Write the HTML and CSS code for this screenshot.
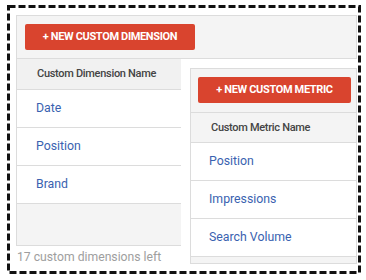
FILE: index.html
```html
<!DOCTYPE html>
<html>
<head>
<meta charset="utf-8">
<link rel="stylesheet" href="styles.css">
</head>
<body>
<div class="frame">
  <div class="dims">
    <div class="bar">
      <div class="btn btn-dim">+ NEW CUSTOM DIMENSION</div>
    </div>
    <div class="table">
      <div class="head">Custom Dimension Name</div>
      <div class="row">Date</div>
      <div class="row">Position</div>
      <div class="row">Brand</div>
      <div class="empty"></div>
    </div>
    <div class="left">17 custom dimensions left</div>
  </div>
  <div class="metrics">
    <div class="mbar">
      <div class="btn btn-met">+ NEW CUSTOM METRIC</div>
    </div>
    <div class="mhead">Custom Metric Name</div>
    <div class="mrow">Position</div>
    <div class="mrow">Impressions</div>
    <div class="mrow">Search Volume</div>
  </div>
  <svg class="dash" width="354" height="269" viewBox="0 0 354 269">
    <rect x="1.5" y="1.5" width="351" height="266" fill="none" stroke="#111" stroke-width="3" stroke-dasharray="7 3"/>
  </svg>
</div>
</body>
</html>
```
FILE: styles.css
```css
html, body { margin: 0; padding: 0; background: #fff; }
body { font-family: Roboto, "Liberation Sans", Arial, sans-serif; }
.frame {
  position: relative;
  margin: 5px 0 0 7px;
  width: 354px;
  height: 269px;
  overflow: hidden;
}
.dash { position: absolute; left: 0; top: 0; }
.dims { margin: 10px 0 0 9px; width: 341px; }
.bar {
  background: #f4f4f4;
  border: 1px solid #dcdcdc;
  padding: 8px 8px 8px 8px;
}
.btn {
  height: 26px;
  line-height: 26px;
  background: #d9442e;
  color: #fff;
  border-radius: 2px;
  font-size: 11px;
  font-weight: 700;
  text-align: center;
  letter-spacing: -0.35px;
}
.btn-dim { width: 170px; }
.table { width: 165px; }
.head {
  height: 30px;
  line-height: 30px;
  background: #f1f1f1;
  border-left: 1px solid #dcdcdc;
  border-bottom: 1px solid #dcdcdc;
  padding-left: 20px;
  font-size: 11px;
  font-weight: 500;
  letter-spacing: -0.3px;
  color: #444;
}
.row {
  height: 37px;
  line-height: 37px;
  background: #fff;
  border-left: 1px solid #dcdcdc;
  border-bottom: 1px solid #dcdcdc;
  padding-left: 19px;
  font-size: 12.3px;
  color: #3a62b0;
}
.empty {
  height: 41px;
  background: #f4f4f4;
  border-left: 1px solid #dcdcdc;
  border-bottom: 1px solid #dcdcdc;
}
.left {
  padding-left: 1px;
  margin-top: 4px;
  font-size: 12.2px;
  color: #9e9e9e;
}
.metrics {
  position: absolute;
  left: 183px;
  top: 63px;
  width: 165px;
  height: 194px;
  background: #f4f4f4;
  border: 1px solid #dcdcdc;
}
.mbar {
  padding: 8px 5px 9px 7px;
  border-bottom: 1px solid #dcdcdc;
}
.btn-met { width: 153px; }
.mhead {
  height: 29px;
  line-height: 29px;
  padding-left: 20px;
  border-bottom: 1px solid #dcdcdc;
  font-size: 11px;
  font-weight: 500;
  letter-spacing: -0.3px;
  color: #444;
}
.mrow {
  height: 37px;
  line-height: 37px;
  background: #fff;
  border-bottom: 1px solid #dcdcdc;
  padding-left: 18px;
  font-size: 12.3px;
  color: #3a62b0;
}
```
